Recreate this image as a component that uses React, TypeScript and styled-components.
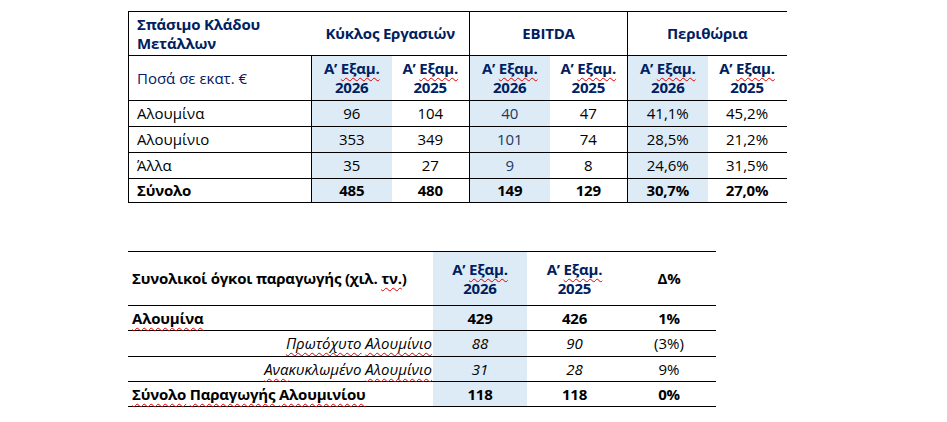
import React from 'react'
import styled, { createGlobalStyle } from 'styled-components'

const NAVY = '#002060'
const SOFT_NAVY = '#203864'
const SHADE = '#DDEBF7'

const GlobalStyle = createGlobalStyle`
  body {
    margin: 0;
    background: #fff;
    font-family: 'Open Sans', 'Noto Sans', sans-serif;
  }
`

const Page = styled.div`
  display: flex;
  flex-direction: column;
  align-items: flex-start;
  gap: 48px;
  padding: 11px 0 0 128px;
`

const Sheet = styled.table`
  border-collapse: collapse;
  table-layout: fixed;
  border-top: 1px solid #000;
  font-size: 15px;
  color: #000;
`

const Row = styled.tr<{ $h: number }>`
  height: ${({ $h }) => $h}px;
  border-bottom: 1px solid #000;
`

type CellProps = {
  $align?: 'left' | 'center' | 'right'
  $shade?: boolean
  $rule?: boolean
  $bold?: boolean
  $italic?: boolean
  $color?: string
  $pad?: number
}

const Cell = styled.td<CellProps>`
  padding: 0 ${({ $pad }) => $pad ?? 4}px;
  text-align: ${({ $align }) => $align ?? 'center'};
  vertical-align: middle;
  line-height: 19px;
  white-space: nowrap;
  background: ${({ $shade }) => ($shade ? SHADE : 'transparent')};
  border-left: ${({ $rule }) => ($rule ? '1px solid #000' : 'none')};
  font-weight: ${({ $bold }) => ($bold ? 700 : 400)};
  letter-spacing: ${({ $bold }) => ($bold ? '-0.2px' : 'normal')};
  font-style: ${({ $italic }) => ($italic ? 'italic' : 'normal')};
  color: ${({ $color }) => $color ?? '#000'};
`

const Spell = styled.span`
  text-decoration: underline wavy #e00000;
  text-decoration-thickness: 1px;
  text-underline-offset: 3px;
  text-decoration-skip-ink: none;
`

const Period = ({ year }: { year: string }) => (
  <>
    Α’ <Spell>Εξαμ.</Spell>
    <br />
    {year}
  </>
)

// first table: metals segment
const segmentCols = [
  { shade: true, rule: true },
  { shade: false, rule: false },
  { shade: true, rule: true, color: SOFT_NAVY },
  { shade: false, rule: false },
  { shade: true, rule: true },
  { shade: false, rule: false },
]

const segmentRows = [
  { label: 'Αλουμίνα', values: ['96', '104', '40', '47', '41,1%', '45,2%'] },
  { label: 'Αλουμίνιο', values: ['353', '349', '101', '74', '28,5%', '21,2%'] },
  { label: 'Άλλα', values: ['35', '27', '9', '8', '24,6%', '31,5%'] },
]

const segmentTotal = ['485', '480', '149', '129', '30,7%', '27,0%']

const SegmentTable = () => (
  <Sheet style={{ width: 658 }}>
    <colgroup>
      <col style={{ width: 183 }} />
      <col style={{ width: 80 }} />
      <col style={{ width: 78 }} />
      <col style={{ width: 80 }} />
      <col style={{ width: 78 }} />
      <col style={{ width: 80 }} />
      <col style={{ width: 79 }} />
    </colgroup>
    <tbody>
      <Row $h={44}>
        <Cell $align="left" $rule $bold $color={NAVY} $pad={8}>
          Σπάσιμο Κλάδου
          <br />
          Μετάλλων
        </Cell>
        <Cell colSpan={2} $bold $color={NAVY}>
          Κύκλος Εργασιών
        </Cell>
        <Cell colSpan={2} $rule $bold $color={NAVY}>
          EBITDA
        </Cell>
        <Cell colSpan={2} $rule $bold $color={NAVY}>
          Περιθώρια
        </Cell>
      </Row>
      <Row $h={45}>
        <Cell $align="left" $rule $color={NAVY} $pad={8}>
          Ποσά σε εκατ. €
        </Cell>
        {segmentCols.map((c, i) => (
          <Cell key={i} $shade={c.shade} $rule={c.rule} $bold $color={NAVY}>
            <Period year={i % 2 === 0 ? '2026' : '2025'} />
          </Cell>
        ))}
      </Row>
      {segmentRows.map((r) => (
        <Row key={r.label} $h={26}>
          <Cell $align="left" $rule $pad={8}>
            {r.label}
          </Cell>
          {r.values.map((v, i) => (
            <Cell key={i} $shade={segmentCols[i].shade} $rule={segmentCols[i].rule} $color={segmentCols[i].color}>
              {v}
            </Cell>
          ))}
        </Row>
      ))}
      <Row $h={24}>
        <Cell $align="left" $rule $bold $pad={8}>
          Σύνολο
        </Cell>
        {segmentTotal.map((v, i) => (
          <Cell key={i} $shade={segmentCols[i].shade} $rule={segmentCols[i].rule} $bold>
            {v}
          </Cell>
        ))}
      </Row>
    </tbody>
  </Sheet>
)

// second table: production volumes
type VolumeRow = {
  label: React.ReactNode
  sub?: boolean
  strong?: boolean
  values: string[]
  h: number
}

const volumeRows: VolumeRow[] = [
  { label: <Spell>Αλουμίνα</Spell>, strong: true, values: ['429', '426', '1%'], h: 25 },
  {
    label: (
      <>
        <Spell>Πρωτόχυτο</Spell> <Spell>Αλουμίνιο</Spell>
      </>
    ),
    sub: true,
    values: ['88', '90', '(3%)'],
    h: 26,
  },
  {
    label: (
      <>
        <Spell>Ανα</Spell>κυκλωμένο <Spell>Αλουμίνιο</Spell>
      </>
    ),
    sub: true,
    values: ['31', '28', '9%'],
    h: 25,
  },
  {
    label: (
      <>
        <Spell>Σύνολο</Spell> <Spell>Παραγωγής</Spell> <Spell>Αλουμινίου</Spell>
      </>
    ),
    strong: true,
    values: ['118', '118', '0%'],
    h: 25,
  },
]

const VolumeTable = () => (
  <Sheet style={{ width: 588 }}>
    <colgroup>
      <col style={{ width: 305 }} />
      <col style={{ width: 94 }} />
      <col style={{ width: 95 }} />
      <col style={{ width: 94 }} />
    </colgroup>
    <tbody>
      <Row $h={54}>
        <Cell $align="left" $bold $pad={4}>
          Συνολικοί όγκοι παραγωγής (χιλ. <Spell>τν.</Spell>)
        </Cell>
        <Cell $shade $bold $color={NAVY}>
          <Period year="2026" />
        </Cell>
        <Cell $bold $color={NAVY}>
          <Period year="2025" />
        </Cell>
        <Cell $bold>Δ%</Cell>
      </Row>
      {volumeRows.map((r, idx) => (
        <Row key={idx} $h={r.h}>
          <Cell $align={r.sub ? 'right' : 'left'} $bold={r.strong} $italic={r.sub} $pad={r.sub ? 1 : 4}>
            {r.label}
          </Cell>
          <Cell $shade $bold={r.strong} $italic={r.sub}>
            {r.values[0]}
          </Cell>
          <Cell $bold={r.strong} $italic={r.sub}>
            {r.values[1]}
          </Cell>
          <Cell $bold={r.strong}>{r.values[2]}</Cell>
        </Row>
      ))}
    </tbody>
  </Sheet>
)

export default function App() {
  return (
    <>
      <GlobalStyle />
      <Page>
        <SegmentTable />
        <VolumeTable />
      </Page>
    </>
  )
}
